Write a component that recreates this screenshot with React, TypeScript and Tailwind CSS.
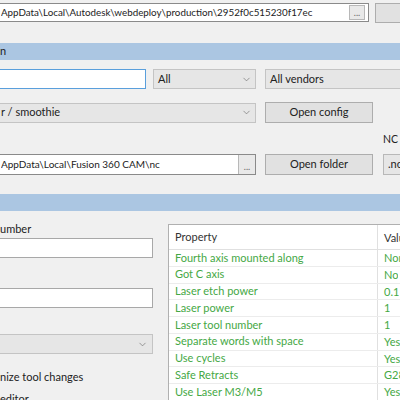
import { ChevronDown } from 'lucide-react';

const font = "font-['Lato','Liberation_Sans',sans-serif]";

const Chevron = () => (
  <ChevronDown size={11} strokeWidth={1.3} className="text-[#606060]" />
);

const DotsButton = ({ className = '' }: { className?: string }) => (
  <div
    className={`flex h-[15px] w-[16px] shrink-0 items-end justify-center border border-[#b8b8b8] bg-[#e9e9e9] pb-[2px] text-[9px] leading-none text-[#666] ${className}`}
  >
    ...
  </div>
);

const Button = ({ label, className = '' }: { label: string; className?: string }) => (
  <div
    className={`flex h-[21px] w-[108px] shrink-0 items-center justify-center border border-[#adadad] bg-[#e1e1e1] text-[11px] text-[#222] ${className}`}
  >
    {label}
  </div>
);

const props: [string, string][] = [
  ['Fourth axis mounted along', 'None'],
  ['Got C axis', 'No'],
  ['Laser etch power', '0.1'],
  ['Laser power', '1'],
  ['Laser tool number', '1'],
  ['Separate words with space', 'Yes'],
  ['Use cycles', 'Yes'],
  ['Safe Retracts', 'G28'],
  ['Use Laser M3/M5', 'Yes'],
];

export default function App() {
  return (
    <div className={`h-[400px] w-[400px] overflow-hidden bg-[#f0f0f0] text-[11px] text-[#222] ${font}`}>
      <div className="-ml-[3px] flex w-[406px] flex-col pt-[3px]">
        {/* path row */}
        <div className="flex h-[19px] items-center">
          <div className="flex h-[19px] w-[372px] shrink-0 items-center border border-[#8a8a8a] bg-white pl-[3px] pr-[3px]">
            <span className="flex-1 overflow-hidden whitespace-nowrap text-[9.8px]">
              AppData\Local\Autodesk\webdeploy\production\2952f0c515230f17ec
            </span>
            <DotsButton />
          </div>
          <div className="ml-[6px] h-[20px] flex-1 border border-[#adadad] bg-[#e1e1e1]" />
        </div>

        {/* section band */}
        <div className="mt-[21px] flex h-[17px] items-center bg-[#abc6e2] pl-[3px] text-[11px] text-[#222]">
          n
        </div>

        {/* filter row */}
        <div className="mt-[9px] flex h-[20px] items-center">
          <div className="h-[20px] w-[149px] shrink-0 border border-[#5a9fdc] bg-white" />
          <div className="ml-[7px] flex h-[20px] w-[103px] shrink-0 items-center justify-between border border-[#c4c4c4] bg-[#e6e6e6] pl-[4px] pr-[3px]">
            <span>All</span>
            <Chevron />
          </div>
          <div className="ml-[9px] flex h-[20px] flex-1 items-center border border-[#c4c4c4] bg-[#e6e6e6] pl-[4px]">
            All vendors
          </div>
        </div>

        {/* post row */}
        <div className="mt-[13px] flex h-[21px] items-center">
          <div className="flex h-[20px] w-[259px] shrink-0 items-center justify-between border border-[#c4c4c4] bg-[#e6e6e6] pl-[3px] pr-[3px]">
            <span>r / smoothie</span>
            <Chevron />
          </div>
          <Button label="Open config" className="ml-[9px]" />
        </div>

        {/* output folder row */}
        <div className="mt-[10px] flex items-end">
          <div className="flex h-[21px] w-[259px] shrink-0 items-center border border-[#8a8a8a] bg-white pl-[3px]">
            <span className="flex-1 overflow-hidden whitespace-nowrap text-[10px]">
              AppData\Local\Fusion 360 CAM\nc
            </span>
            <div className="flex h-[19px] w-[17px] items-end justify-center border-l border-[#b8b8b8] bg-[#e9e9e9] pb-[3px] text-[9px] leading-none text-[#666]">
              ...
            </div>
          </div>
          <Button label="Open folder" className="ml-[9px]" />
          <div className="ml-[10px] flex flex-1 flex-col">
            <div className="flex items-center gap-[2px] text-[10.5px] leading-[13px]">
              NC <span className="h-[3px] w-[3px] bg-[#e8c060]" />
            </div>
            <div className="mt-[8px] flex h-[21px] items-center overflow-hidden whitespace-nowrap border border-[#b8b8b8] bg-[#e6e6e6] pl-[4px]">
              .nc
            </div>
          </div>
        </div>

        {/* section band 2 */}
        <div className="mt-[19px] h-[17px] bg-[#abc6e2]" />

        {/* lower area */}
        <div className="flex">
          <div className="flex w-[156px] shrink-0 flex-col">
            <div className="mt-[12px] pl-[3px] leading-[12px]">umber</div>
            <div className="mt-[3px] h-[20px] border border-[#a8a8a8] bg-white" />
            <div className="mt-[30px] h-[20px] border border-[#a8a8a8] bg-white" />
            <div className="mt-[26px] flex h-[20px] items-center justify-end border border-[#c4c4c4] bg-[#e6e6e6] pr-[4px]">
              <Chevron />
            </div>
            <div className="mt-[17px] pl-[3px] leading-[12px]">nize tool changes</div>
            <div className="mt-[10px] pl-[3px] leading-[12px]">editor</div>
          </div>

          <div className="ml-[15px] mt-[13px] min-w-0 flex-1 border border-[#b0b0b0] bg-white">
            <div className="flex h-[25px] items-center border-b border-[#e0e0e0] text-[#333]">
              <div className="w-[208px] shrink-0 pl-[6px]">Property</div>
              <div className="h-full overflow-hidden whitespace-nowrap border-l border-[#e0e0e0] pl-[6px] leading-[25px]">Value</div>
            </div>
            {props.map(([name, value]) => (
              <div
                key={name}
                className="flex h-[16.75px] items-center border-b border-[#ececec] text-[#45a845]"
              >
                <div className="w-[208px] shrink-0 overflow-hidden whitespace-nowrap pl-[6px]">{name}</div>
                <div className="h-full overflow-hidden whitespace-nowrap border-l border-[#e0e0e0] pl-[6px] leading-[16px]">{value}</div>
              </div>
            ))}
          </div>
        </div>
      </div>
    </div>
  );
}
